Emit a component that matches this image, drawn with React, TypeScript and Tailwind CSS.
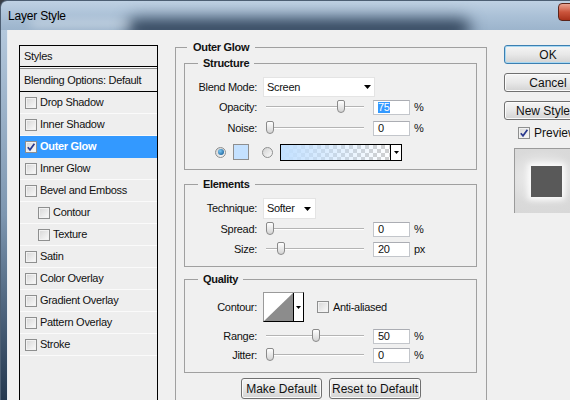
import React from "react";

const layers = [
  { label: "Drop Shadow" },
  { label: "Inner Shadow" },
  { label: "Outer Glow", checked: true, active: true },
  { label: "Inner Glow" },
  { label: "Bevel and Emboss" },
  { label: "Contour", sub: true },
  { label: "Texture", sub: true },
  { label: "Satin" },
  { label: "Color Overlay" },
  { label: "Gradient Overlay" },
  { label: "Pattern Overlay" },
  { label: "Stroke" },
];

function Check({ checked = false }: { checked?: boolean }) {
  return (
    <span className="grid h-[12px] w-[12px] shrink-0 place-items-center border border-[#8e8f8f] bg-gradient-to-br from-[#d6d6d6] to-[#fbfbfb] shadow-[inset_0_0_0_1px_#f2f2f2]">
      {checked && (
        <svg width="10" height="10" viewBox="0 0 10 10">
          <path d="M1.8 5.2 L4 7.8 L8.4 1.8" fill="none" stroke="#2b3a8f" strokeWidth="1.7" />
        </svg>
      )}
    </span>
  );
}

function Radio({ on = false }: { on?: boolean }) {
  return (
    <span className="grid h-[11px] w-[11px] shrink-0 place-items-center rounded-full border border-[#8e8f8f] bg-gradient-to-br from-[#d2d2d2] to-[#fafafa]">
      {on && <span className="h-[6px] w-[6px] rounded-full bg-[radial-gradient(circle_at_35%_35%,#7cc8f4,#0b4f8a)]" />}
    </span>
  );
}

function Arrow({ w = 7, h = 4 }: { w?: number; h?: number }) {
  return (
    <svg width={w} height={h} viewBox={`0 0 ${w} ${h}`}>
      <polygon points={`0,0 ${w},0 ${w / 2},${h}`} fill="#000" />
    </svg>
  );
}

function Slider({ pos }: { pos: number }) {
  return (
    <div className="relative h-[16px] w-[98px]">
      <div className="absolute left-0 right-0 top-[7px] h-[2px] border-t border-b border-t-[#b4b4b4] border-b-white" />
      <div
        className="absolute top-[1px] h-[13px] w-[8px] rounded-t-[2px] rounded-b-[4px] border border-[#8a8a8a] bg-gradient-to-b from-white to-[#d4d4d4]"
        style={{ left: pos }}
      />
    </div>
  );
}

function NumBox({ value, selected = false }: { value: string; selected?: boolean }) {
  return (
    <div className="flex h-[15px] w-[37px] items-center border border-[#c3c6cb] border-t-[#abadb3] bg-white pl-[4px]">
      {selected ? <span className="bg-[#3399ff] text-white">{value}</span> : value}
    </div>
  );
}

function SliderRow({
  label,
  pos,
  value,
  unit,
  selected,
  className = "",
}: {
  label: string;
  pos: number;
  value: string;
  unit: string;
  selected?: boolean;
  className?: string;
}) {
  return (
    <div className={`flex h-[16px] items-center ${className}`}>
      <span className="w-[64px] text-right">{label}</span>
      <div className="ml-[9px]">
        <Slider pos={pos} />
      </div>
      <div className="ml-[9px]">
        <NumBox value={value} selected={selected} />
      </div>
      <span className="ml-[4px]">{unit}</span>
    </div>
  );
}

function Group({ title, className = "", children }: { title: string; className?: string; children: React.ReactNode }) {
  return (
    <fieldset className={`w-[293px] border border-[#a0a0a0] px-[8px] ${className}`}>
      <legend className="ml-[5px] px-[5px] font-bold leading-[14px]">{title}</legend>
      {children}
    </fieldset>
  );
}

function Btn({ children, primary = false, className = "" }: { children: React.ReactNode; primary?: boolean; className?: string }) {
  return (
    <div
      className={`flex h-[19px] items-center justify-center rounded-[3px] border bg-gradient-to-b from-[#f5f5f5] via-[#e8e8e8] to-[#d3d3d3] text-[12px] tracking-normal whitespace-nowrap ${
        primary ? "border-[#3c7fb1] shadow-[inset_0_0_0_1px_#a8d8f2]" : "border-[#707070] shadow-[inset_0_0_0_1px_#fbfbfb]"
      } ${className}`}
    >
      {children}
    </div>
  );
}

export default function App() {
  return (
    <div className="h-[400px] w-[570px] overflow-hidden bg-[#3a3f46] font-['Liberation_Sans',Arial,sans-serif] text-[11px] leading-none tracking-[-0.3px] text-[#111]">
      <div className="flex h-full flex-col overflow-hidden rounded-tl-[7px] border-t border-l border-[#4d5f73]">
        {/* title bar */}
        <div className="relative flex h-[29px] shrink-0 items-center overflow-hidden bg-gradient-to-b from-[#bfd1e3] via-[#abc1d7] to-[#9cb4cc] pl-[7px]">
          <div className="absolute left-[125px] top-[18px] h-[20px] w-[345px] rounded-full bg-[#2a3d54] blur-[8px]" />
          <div className="absolute left-[30px] top-[20px] h-[6px] w-[100px] rounded-full bg-white/40 blur-[4px]" />
          <span className="relative text-[12px] tracking-[-0.2px] text-black">Layer Style</span>
          <div className="absolute right-[-24px] top-[2px] h-[18px] w-[36px] rounded-[4px] border border-[#5b2419] bg-gradient-to-b from-[#e9a392] via-[#cb553c] to-[#a9311a]" />
        </div>

        <div className="flex min-h-0 flex-1">
          <div className="w-[6px] shrink-0 bg-gradient-to-b from-[#b4c8dc] via-[#7d96b0] to-[#24384f]" />
          <div className="flex min-w-0 flex-1 items-start border-l border-[#e6ecf2] bg-[#f0f0f0]">
            {/* layer list */}
            <div className="ml-[11px] mt-[15px] h-[380px] w-[139px] shrink-0 border border-black bg-[#eeeeee]">
              <div className="flex h-[21px] items-center border-b border-black pl-[4px]">Styles</div>
              <div className="h-[1px] bg-[#fafafa]" />
              <div className="flex h-[24px] items-center border-t border-b border-t-[#8a8a8a] border-b-black pl-[4px]">
                Blending Options: Default
              </div>
              {layers.map((l) => (
                <div
                  key={l.label}
                  className={`flex h-[22px] items-center gap-[3px] border-b ${
                    l.active ? "border-[#3399ff] bg-[#3399ff] font-bold text-white" : "border-[#fafafa]"
                  } ${l.sub ? "pl-[18px]" : "pl-[5px]"}`}
                >
                  <Check checked={l.checked} />
                  <span>{l.label}</span>
                </div>
              ))}
            </div>

            {/* settings */}
            <fieldset className="ml-[17px] mt-[10px] h-[380px] w-[312px] shrink-0 border border-[#a0a0a0] px-[8px]">
              <legend className="ml-[3px] px-[6px] font-bold leading-[14px]">Outer Glow</legend>

              <Group title="Structure" className="mt-[2px] pt-[7px] pb-[9px]">
                <div className="flex h-[20px] items-center">
                  <span className="w-[64px] text-right">Blend Mode:</span>
                  <div className="ml-[6px] flex h-[20px] w-[112px] items-center justify-between border border-[#e4e4e4] bg-white pl-[3px] pr-[3px]">
                    <span>Screen</span>
                    <Arrow />
                  </div>
                </div>
                <SliderRow label="Opacity:" pos={71} value="75" unit="%" selected className="mt-[2px]" />
                <SliderRow label="Noise:" pos={0} value="0" unit="%" className="mt-[5px]" />
                <div className="mt-[8px] flex h-[16px] items-center">
                  <div className="ml-[22px]">
                    <Radio on />
                  </div>
                  <div className="ml-[7px] h-[16px] w-[16px] border border-[#8e8e8e] bg-[#c4e1ff]" />
                  <div className="ml-[13px]">
                    <Radio />
                  </div>
                  <div className="ml-[7px] flex h-[17px] w-[122px] border border-black">
                    <div className="flex-1 bg-[repeating-conic-gradient(#cfcfcf_0_25%,#ffffff_0_50%)] bg-[length:8px_8px]">
                      <div className="h-full w-full bg-gradient-to-r from-[#c2e0ff] to-[#c2e0ff00]" />
                    </div>
                    <div className="flex w-[11px] items-center justify-center border-l border-black bg-white">
                      <Arrow w={5} h={3} />
                    </div>
                  </div>
                </div>
              </Group>

              <Group title="Elements" className="mt-[7px] pt-[7px] pb-[9px]">
                <div className="flex h-[21px] items-center">
                  <span className="w-[64px] text-right">Technique:</span>
                  <div className="ml-[6px] flex h-[21px] w-[53px] items-center justify-between border border-[#e4e4e4] bg-white pl-[3px] pr-[4px]">
                    <span>Softer</span>
                    <Arrow />
                  </div>
                </div>
                <SliderRow label="Spread:" pos={0} value="0" unit="%" className="mt-[2px]" />
                <SliderRow label="Size:" pos={11} value="20" unit="px" className="mt-[4px]" />
              </Group>

              <Group title="Quality" className="mt-[5px] pt-[6px] pb-[9px]">
                <div className="flex h-[30px] items-center">
                  <span className="w-[64px] text-right">Contour:</span>
                  <div className="ml-[6px] flex h-[30px] w-[41px] border border-black border-t-[#9a9a9a] border-l-[#9a9a9a] bg-white">
                    <svg width="29" height="28" viewBox="0 0 29 28">
                      <polygon points="0,28 29,0 29,28" fill="#8c8c8c" />
                    </svg>
                    <div className="flex flex-1 items-center justify-center border-l border-black">
                      <Arrow w={5} h={3} />
                    </div>
                  </div>
                  <div className="ml-[13px]">
                    <Check />
                  </div>
                  <span className="ml-[4px]">Anti-aliased</span>
                </div>
                <SliderRow label="Range:" pos={46} value="50" unit="%" className="mt-[6px]" />
                <SliderRow label="Jitter:" pos={0} value="0" unit="%" className="mt-[3px]" />
              </Group>

              <div className="mt-[5px] flex justify-center gap-[7px]">
                <Btn className="h-[21px] w-[81px] text-[11px] tracking-[-0.4px]">Make Default</Btn>
                <Btn className="h-[21px] w-[92px] text-[11px] tracking-[-0.4px]">Reset to Default</Btn>
              </div>
            </fieldset>

            {/* right column */}
            <div className="ml-[17px] mt-[15px] flex w-[88px] shrink-0 flex-col">
              <Btn primary>OK</Btn>
              <Btn className="mt-[9px]">Cancel</Btn>
              <Btn className="mt-[9px]">New Style...</Btn>
              <div className="mt-[7px] flex h-[12px] items-center pl-[14px]">
                <Check checked />
                <span className="ml-[4px] whitespace-nowrap text-[12px] tracking-normal">Preview</span>
              </div>
              <div className="ml-[10px] mt-[9px] h-[65px] w-[78px] border-t border-l border-[#9a9a9a] bg-[radial-gradient(ellipse_at_35%_45%,#f2f2f2_0%,#dadada_55%,#d6d6d6_100%)] pl-[16px] pt-[17px]">
                <div className="h-[31px] w-[31px] bg-[#595959] shadow-[0_0_6px_3px_rgba(255,255,255,0.9)]" />
              </div>
            </div>
          </div>
        </div>
      </div>
    </div>
  );
}
